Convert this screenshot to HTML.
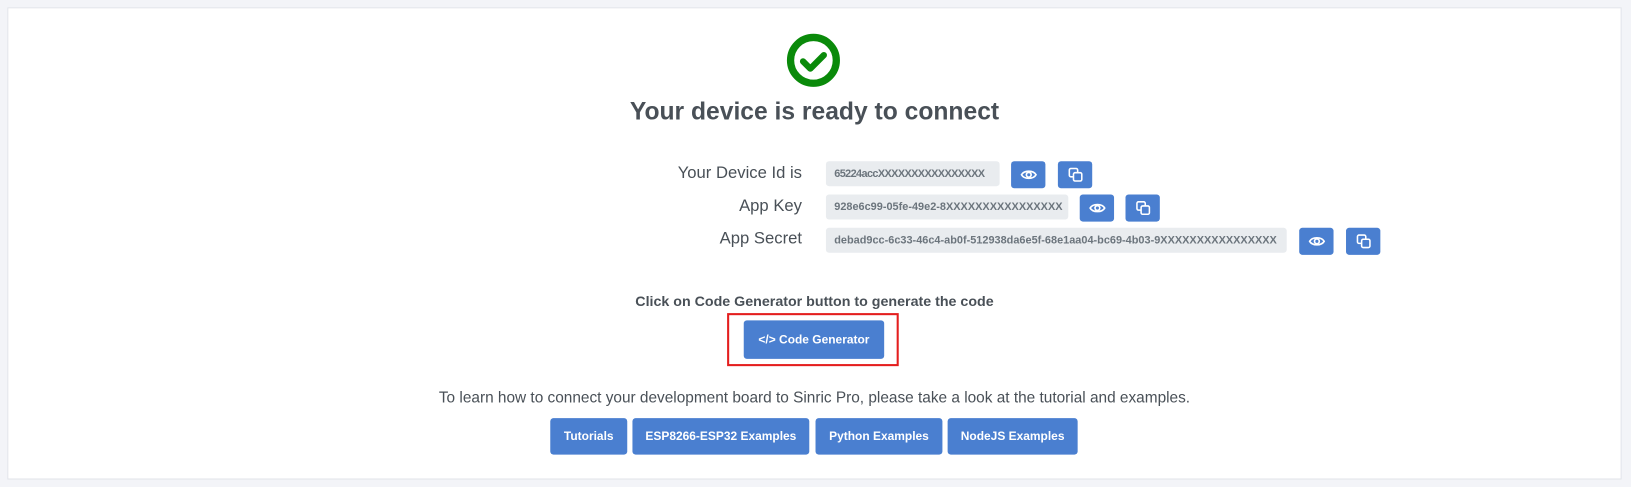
<!DOCTYPE html>
<html><head><style>
body{margin:0;width:1631px;height:487px;background:#f3f4f8;font-family:"Liberation Sans",sans-serif;position:relative;overflow:hidden;color:#495057}
#w{position:absolute;left:0;top:0;width:1568px;height:468px;transform:scale(1.0402);transform-origin:0 0}
.card{position:absolute;left:7px;top:7px;width:1552px;height:454px;background:#fff;border:1px solid #e1e3ea;box-sizing:border-box}
.a{position:absolute}
.lbl{position:absolute;right:797px;font-size:16px;color:#495057;white-space:nowrap}
.val{position:absolute;left:794px;height:24px;line-height:24px;background:#e9ecef;border-radius:3px;font-size:10.5px;font-weight:bold;color:#6c757d;padding:0 8px;box-sizing:border-box;white-space:nowrap;overflow:hidden}
.btn{position:absolute;background:#4a7fd0;border-radius:3px;color:#fff;font-weight:bold;font-size:11.5px;text-align:center;white-space:nowrap}
.ib{width:33px;height:26px;display:flex;align-items:center;justify-content:center}
.c{position:absolute;left:0;width:1566px;text-align:center;white-space:nowrap}
</style></head><body>
<div id="w">
<div class="card"></div>
<svg class="a" style="left:756px;top:32px" width="52" height="52" viewBox="0 0 52 52"><circle cx="26" cy="26" r="22" fill="none" stroke="#0a8a0a" stroke-width="7"/><path d="M16 27l7 7 13-13" fill="none" stroke="#0a8a0a" stroke-width="6" stroke-linecap="round" stroke-linejoin="round"/></svg>
<div class="c" style="top:95px;font-size:23.7px;font-weight:bold;color:#495057">Your device is ready to connect</div>
<div class="lbl" style="top:158px">Your Device Id is</div>
<div class="lbl" style="top:190px">App Key</div>
<div class="lbl" style="top:221px">App Secret</div>
<div class="val" style="top:155px;width:167px;letter-spacing:-0.6px">65224accXXXXXXXXXXXXXXXX</div>
<div class="val" style="top:187px;width:233px">928e6c99-05fe-49e2-8XXXXXXXXXXXXXXXX</div>
<div class="val" style="top:219px;width:443px">debad9cc-6c33-46c4-ab0f-512938da6e5f-68e1aa04-bc69-4b03-9XXXXXXXXXXXXXXXX</div>
<svg width="0" height="0" style="position:absolute"><defs>
<g id="eye"><path d="M1 7C3.5 2.5 12.5 2.5 15 7C12.5 11.5 3.5 11.5 1 7Z" fill="none" stroke="#fff" stroke-width="1.6"/><circle cx="8" cy="7" r="2.3" fill="none" stroke="#fff" stroke-width="1.6"/></g>
<g id="cp"><rect x="1" y="1" width="8" height="8" rx="1.5" fill="none" stroke="#fff" stroke-width="1.5"/><rect x="5" y="5" width="8" height="8" rx="1.5" fill="#4a7fd0" stroke="#fff" stroke-width="1.5"/></g>
</defs></svg>
<div class="btn ib" style="left:972px;top:155px"><svg width="16" height="14"><use href="#eye"/></svg></div>
<div class="btn ib" style="left:1017px;top:155px"><svg width="14" height="14"><use href="#cp"/></svg></div>
<div class="btn ib" style="left:1038px;top:187px"><svg width="16" height="14"><use href="#eye"/></svg></div>
<div class="btn ib" style="left:1082px;top:187px"><svg width="14" height="14"><use href="#cp"/></svg></div>
<div class="btn ib" style="left:1249px;top:219px"><svg width="16" height="14"><use href="#eye"/></svg></div>
<div class="btn ib" style="left:1294px;top:219px"><svg width="14" height="14"><use href="#cp"/></svg></div>
<div class="c" style="top:282px;font-size:13.7px;font-weight:bold;color:#495057">Click on Code Generator button to generate the code</div>
<div class="a" style="left:699px;top:301px;width:165px;height:51px;border:2px solid #e41e1e;box-sizing:border-box"></div>
<div class="btn" style="left:715px;top:308px;width:135px;height:37px;line-height:38px">&lt;/&gt; Code Generator</div>
<div class="c" style="top:375px;font-size:14.8px;color:#495057">To learn how to connect your development board to Sinric Pro, please take a look at the tutorial and examples.</div>
<div class="btn" style="left:529px;top:402px;width:74px;height:35px;line-height:36px">Tutorials</div>
<div class="btn" style="left:608px;top:402px;width:170px;height:35px;line-height:36px">ESP8266-ESP32 Examples</div>
<div class="btn" style="left:784px;top:402px;width:122px;height:35px;line-height:36px">Python Examples</div>
<div class="btn" style="left:911px;top:402px;width:125px;height:35px;line-height:36px">NodeJS Examples</div>
</div>
</body></html>
